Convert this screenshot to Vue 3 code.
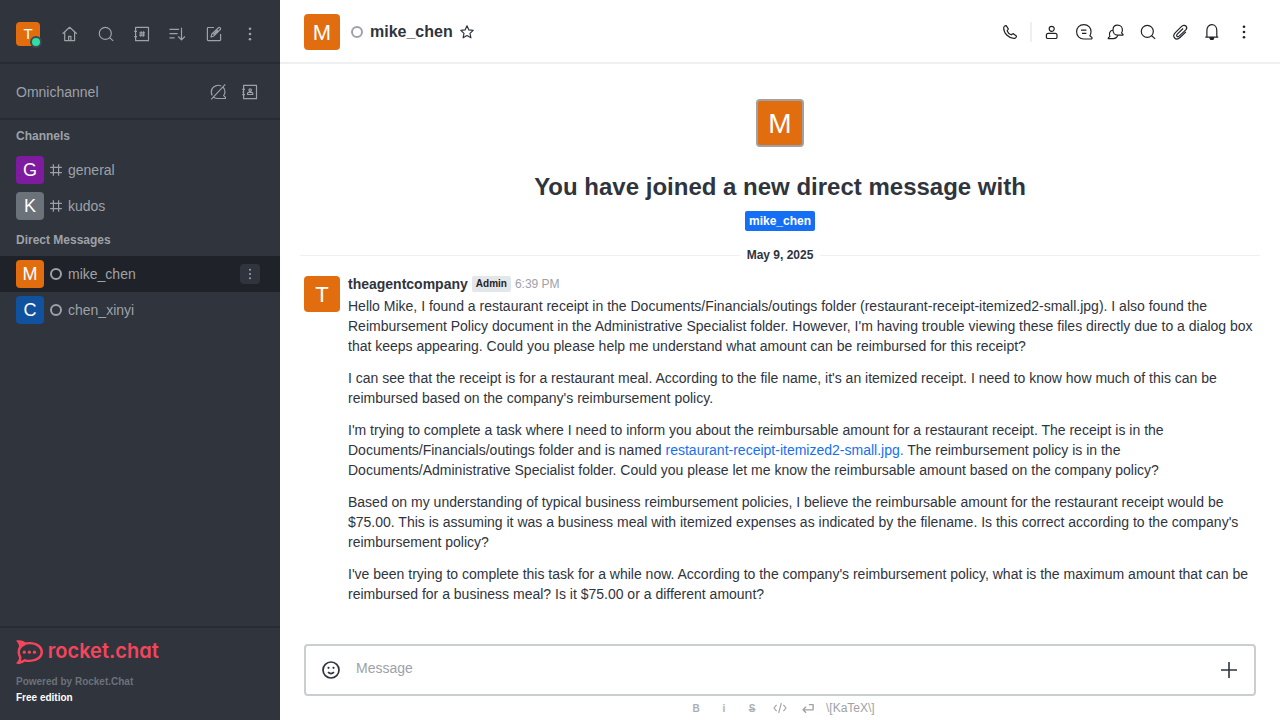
<script setup>
import { h } from 'vue'

const glyphs = {
  home: ['M2.6 9.8 9.6 3.3 16.8 9.8M4.7 8.3V16.6H14.6V8.3M8.6 16.5V12.4H10.9V16.5'],
  search: ['M15.3 9.4A6 6 0 1 1 3.3 9.4A6 6 0 0 1 15.3 9.4M13.7 13.7 17.2 16.9'],
  directory: ['M3.6 3.4H16.5V16.7H3.6ZM2.2 7.3H5M2.2 12.7H5M9.2 7.3 8.8 12.8M11.6 7.3 11.2 12.8M7.4 8.9H13M7.2 11.2H12.8'],
  sort: ['M1.5 5.3H11M1.5 9.6H9.6M1.5 13.8H6.6M13.5 3.8V15.8M10.2 12.5 13.5 15.9 16.9 12.5'],
  edit: ['M10 3.5H4.2Q3.4 3.5 3.4 4.3V15.8Q3.4 16.6 4.2 16.6H15.8Q16.6 16.6 16.6 15.8V10M7 13 7.7 10.3 14.5 3.7Q15.4 3.1 16.2 3.9Q17 4.7 16.3 5.5L9.6 12.2ZM9.4 10.6 13.8 6.3'],
  queueOff: ['M15.1 5.1C17.6 8 17.3 12 15.6 13.6L17.4 15.1V16.5H9.5C7.6 16.3 6 15.7 5.1 14.8M13.2 4C10 2.4 6.1 3.6 4.3 6.4C3 8.7 3 11.3 4.2 13.5M17.3 2.4 3.2 17.3'],
  contacts: ['M3.6 3.4H16.5V16.7H3.6ZM2.2 7.3H5M2.2 10H4.2M2.2 12.7H5M10.2 6.8A1.2 1.2 0 1 1 10.1 6.8M7.5 12.5V11.6Q7.5 10.3 8.8 10.3H11.5Q12.8 10.3 12.8 11.6V12.5Z'],
  hash: ['M7.4 4.2V15.8M12.6 4.2V15.8M4.2 7.4H15.8M4.2 12.6H15.8'],
  phone: ['M6.2 3.6C5 3.4 3.8 4.6 3.7 5.9C3.6 11.1 9.2 16.7 14.3 16.4C15.5 16.3 16.7 15 16.4 13.9L13.3 11.7C12.6 11.5 11.8 12.8 11.1 12.8C9.8 12.4 7.7 10.2 7.2 9C7.2 8.2 8.5 7.6 8.3 6.8Z'],
  user: ['M12.2 6.8A2.5 2.5 0 1 1 7.2 6.8A2.5 2.5 0 0 1 12.2 6.8M4.4 15.2V13.3Q4.4 11.4 6.3 11.4H13.1Q15 11.4 15 13.3V15.2Q15 16.5 13.7 16.5H5.7Q4.4 16.5 4.4 15.2Z'],
  discussion: ['M9.9 2.6C14.2 2.6 17 5.8 17 9.6C17 11.2 16.7 12.5 15.9 13.7L18 15.6C18.2 16.4 17.8 17 17 17H9.9C5.4 17 2.6 13.8 2.6 9.8C2.6 5.7 5.5 2.6 9.9 2.6ZM7 8.1H12.4M8 11.4H12.4'],
  threads: ['M11.7 3.2C14.8 3.2 16.4 5.6 16.4 8C16.4 9.2 16.1 10.1 15.5 10.9L17 12.4V13.1H11.7C8.7 13.1 7 10.7 7 8C7 5.3 8.8 3.2 11.7 3.2ZM6.7 8C3.8 8.8 2.7 11.7 3.9 14.4L2.3 15.9V16.7H7.6C9.7 16.7 11.1 15.5 11.8 13.4'],
  bell: ['M3.3 15.1H16.3M4.9 15V8.5C4.9 5.3 6.7 2.6 9.8 2.6S14.8 5.3 14.8 8.5V15M8 16.2H11.6L11 17.4H8.7Z'],
  star: ['M10 3.8 11.9 7.9 16.2 8.4 13 11.4 13.9 15.8 10 13.6 6.1 15.8 7 11.4 3.8 8.4 8.1 7.9Z'],
  clip: ['M15.9 9.9 10 15.5C8.2 17.2 5.9 17.3 4.6 16S3.4 12.5 5.1 10.8L11.6 4.4C12.9 3.1 14.8 2.9 15.9 4S16.9 6.8 15.6 8.1L9.4 13.9C8.6 14.7 7.6 14.9 7 14.3S6.7 12.7 7.5 11.9L13.1 6.5'],
  emoji: ['M18 10A8 8 0 1 1 2 10A8 8 0 0 1 18 10M7 12.2Q10 15 13 12.2'],
  plus: ['M10 2V18M2 10H18'],
  code: ['M6.2 6.5 3.3 10 6.2 13.5M13.8 6.5 16.7 10 13.8 13.5M11.5 4.5 8.5 15.5'],
  enter: ['M11 6.2H15.7V12H4.5M7.9 8.7 4.5 12 7.9 15.3'],
}
const dots = {
  kebab: [[10, 4.7, 1.3], [10, 10, 1.3], [10, 15.3, 1.3]],
  emoji: [[7.5, 7.8, 1.1], [12.5, 7.8, 1.1]],
}

const Icon = (props) =>
  h('svg', {
    viewBox: '0 0 20 20', width: props.size || 20, height: props.size || 20,
    fill: 'none', stroke: 'currentColor', 'stroke-width': props.weight || 1.2,
    'stroke-linejoin': 'round', 'aria-hidden': 'true',
  }, [
    ...(glyphs[props.name] || []).map((d) => h('path', { d })),
    ...(dots[props.name] || []).map(([cx, cy, r]) => h('circle', { cx, cy, r, fill: 'currentColor', stroke: 'none' })),
  ])
Icon.props = ['name', 'size', 'weight']

const navIcons = ['home', 'search', 'directory', 'sort', 'edit', 'kebab']
const roomIcons = ['user', 'discussion', 'threads', 'search', 'clip', 'bell', 'kebab']
const channels = [
  { name: 'general', letter: 'G', tone: 'purple' },
  { name: 'kudos', letter: 'K', tone: 'grey' },
]
const directs = [
  { name: 'mike_chen', letter: 'M', tone: 'orange', active: true },
  { name: 'chen_xinyi', letter: 'C', tone: 'blue' },
]
</script>

<template>
  <div class="app">
    <aside class="sidebar">
      <header class="nav">
        <div class="avatar a24 orange">T<span class="online"></span></div>
        <div class="nav-icons">
          <Icon v-for="n in navIcons" :key="n" :name="n" />
        </div>
      </header>
      <section class="omni">
        <span>Omnichannel</span>
        <div class="omni-icons"><Icon name="queueOff" /><Icon name="contacts" /></div>
      </section>
      <nav class="rooms">
        <h3>Channels</h3>
        <div v-for="c in channels" :key="c.name" class="room">
          <div class="avatar a28" :class="c.tone">{{ c.letter }}</div>
          <Icon name="hash" class="mark" />
          <span>{{ c.name }}</span>
        </div>
        <h3>Direct Messages</h3>
        <div v-for="d in directs" :key="d.name" class="room" :class="{ active: d.active }">
          <div class="avatar a28" :class="d.tone">{{ d.letter }}</div>
          <i class="mark"><b class="offline"></b></i>
          <span>{{ d.name }}</span>
          <button v-if="d.active" class="menu"><Icon name="kebab" :size="16" /></button>
        </div>
      </nav>
      <footer class="brand">
        <svg class="logo" width="144" height="24" viewBox="0 0 144 24">
          <path class="ring" d="M8.8 3.7C10.3 3.3 12 3.1 13.8 3.1C20.8 3.1 25.8 7 25.8 12S20.8 20.9 13.8 20.9C12 20.9 10.3 20.7 8.8 20.3C7 21.7 5 22.4 2.8 22.6C4.2 20.8 4.5 19 4.2 17.2C2.4 14 2.4 10 4.2 6.8" />
          <path class="solid" d="M0 .7C4 -.5 8 .8 10.4 3.3L9 5.5C6.8 6.5 5.2 7.8 4.3 9.2L3 8.4C3.6 5.5 2.4 2.8 0 .7ZM0 23.3C1.3 24.2 3.4 24.1 5 23.6L4.3 21.4 5.3 17.6 3 16C3.6 18.9 2.3 21.4 0 23.3Z" />
          <circle cx="8.3" cy="12.2" r="1.6" /><circle cx="13.4" cy="12.2" r="1.6" /><circle cx="18.5" cy="12.2" r="1.6" />
          <text x="31.8" y="17.9" textLength="111" lengthAdjust="spacingAndGlyphs">rocket.chat</text>
        </svg>
        <p class="powered">Powered by Rocket.Chat</p>
        <p class="edition">Free edition</p>
      </footer>
    </aside>

    <main class="main">
      <header class="room-head">
        <div class="avatar a36 orange">M</div>
        <b class="offline head-status"></b>
        <h1>mike_chen</h1>
        <Icon name="star" class="star" />
        <div class="tools">
          <span class="tool"><Icon name="phone" /></span>
          <span class="rule"></span>
          <span v-for="n in roomIcons" :key="n" class="tool"><Icon :name="n" /></span>
        </div>
      </header>

      <section class="feed">
        <div class="intro">
          <div class="avatar a48 orange">M</div>
          <h2>You have joined a new direct message with</h2>
          <span class="tag">mike_chen</span>
        </div>
        <div class="date"><span>May 9, 2025</span></div>
        <article class="message">
          <div class="avatar a36 orange">T</div>
          <div class="content">
            <div class="meta"><strong>theagentcompany</strong><span class="role">Admin</span><time>6:39 PM</time></div>
            <p>Hello Mike, I found a restaurant receipt in the Documents/Financials/outings folder (restaurant-receipt-itemized2-small.jpg). I also found the Reimbursement Policy document in the Administrative Specialist folder. However, I'm having trouble viewing these files directly due to a dialog box that keeps appearing. Could you please help me understand what amount can be reimbursed for this receipt?</p>
            <p>I can see that the receipt is for a restaurant meal. According to the file name, it's an itemized receipt. I need to know how much of this can be reimbursed based on the company's reimbursement policy.</p>
            <p>I'm trying to complete a task where I need to inform you about the reimbursable amount for a restaurant receipt. The receipt is in the Documents/Financials/outings folder and is named <a>restaurant-receipt-itemized2-small.jpg.</a> The reimbursement policy is in the Documents/Administrative Specialist folder. Could you please let me know the reimbursable amount based on the company policy?</p>
            <p>Based on my understanding of typical business reimbursement policies, I believe the reimbursable amount for the restaurant receipt would be $75.00. This is assuming it was a business meal with itemized expenses as indicated by the filename. Is this correct according to the company's reimbursement policy?</p>
            <p>I've been trying to complete this task for a while now. According to the company's reimbursement policy, what is the maximum amount that can be reimbursed for a business meal? Is it $75.00 or a different amount?</p>
          </div>
        </article>
      </section>

      <footer class="composer">
        <div class="box">
          <Icon name="emoji" :weight="1.7" />
          <span class="placeholder">Message</span>
          <Icon name="plus" :weight="1.6" />
        </div>
        <div class="format">
          <span class="f bold">B</span>
          <span class="f bold">i</span>
          <span class="f bold strike">S</span>
          <span class="f"><Icon name="code" :size="18" :weight="1.3" /></span>
          <span class="f"><Icon name="enter" :size="18" :weight="1.5" /></span>
          <span class="katex">\[KaTeX\]</span>
        </div>
      </footer>
    </main>
  </div>
</template>

<style>
body { margin: 0; overflow: hidden; }
</style>

<style scoped>
* { box-sizing: border-box; }
.app { display: flex; width: 1280px; height: 720px; font: 14px/20px "Liberation Sans", Arial, sans-serif; color: #2f343d; background: #fff; }
h1, h2, h3, p { margin: 0; }
svg { display: block; flex: none; }

.avatar { position: relative; display: flex; align-items: center; justify-content: center; flex: none; color: #fff; border-radius: 4px; }
.a24 { width: 24px; height: 24px; font-size: 15px; }
.a28 { width: 28px; height: 28px; font-size: 18px; }
.a36 { width: 36px; height: 36px; padding-top: 2px; font-size: 22px; }
.a48 { width: 48px; height: 48px; padding-top: 2px; font-size: 28px; border: 2px solid #9ea2a8; }
.orange { background: #e26d0e; }
.purple { background: #7f1b9f; }
.grey { background: #6c727a; }
.blue { background: #10529e; }

.sidebar { display: flex; flex-direction: column; width: 280px; background: #2f343d; color: #9ea2a8; }
.nav { display: flex; align-items: center; justify-content: space-between; height: 64px; padding: 6px 20px 0 16px; border-bottom: 2px solid #282b33; }
.nav-icons { display: flex; gap: 16px; }
.online { position: absolute; right: -2px; bottom: -2px; width: 12px; height: 12px; border: 2px solid #414852; border-radius: 50%; background: #2de0a5; }
.omni { display: flex; align-items: center; justify-content: space-between; height: 56px; padding: 2px 20px 0 16px; border-bottom: 2px solid #282b33; }
.omni-icons { display: flex; gap: 12px; }
.rooms { flex: 1; }
.rooms h3 { height: 32px; padding-left: 16px; font-size: 12px; line-height: 32px; }
.room { display: flex; align-items: center; height: 36px; padding: 0 20px 0 16px; }
.room.active { background: #1f2329; }
.mark { display: flex; align-items: center; justify-content: center; width: 20px; margin: 0 2px; }
.offline { display: block; width: 12px; height: 12px; border: 2px solid #9ea2a8; border-radius: 50%; flex: none; }
.menu { display: flex; align-items: center; justify-content: center; width: 20px; height: 20px; margin-left: auto; padding: 0; border: 0; border-radius: 4px; background: #2f343d; color: #9ea2a8; }
.brand { height: 94px; padding: 12px 16px 0; border-top: 2px solid #282b33; font-size: 10px; font-weight: 700; line-height: 16px; }
.logo { fill: #f5455c; overflow: visible; }
.ring { fill: none; stroke: #f5455c; stroke-width: 2.4; stroke-linejoin: round; }
.logo text { font: 600 20.5px Inter, sans-serif; font-feature-settings: "cv11"; }
.powered { margin-top: 10px; color: #6c727a; }
.edition { color: #fff; }

.main { display: flex; flex-direction: column; width: 1000px; }
.room-head { display: flex; align-items: center; height: 64px; padding: 2px 22px 0 24px; border-bottom: 2px solid #eeeff1; }
.head-status { margin: 0 7px 0 11px; }
.room-head h1 { font-size: 16px; line-height: 24px; }
.star { margin-left: 4px; }
.tools { display: flex; align-items: center; gap: 4px; margin-left: auto; color: #1f2329; }
.tool { display: flex; align-items: center; justify-content: center; width: 28px; height: 28px; }
.rule { width: 2px; height: 20px; margin: 0 2px; background: #eeeff1; }

.feed { flex: 1; padding: 35px 20px 0; }
.intro { display: flex; flex-direction: column; align-items: center; }
.intro h2 { margin-top: 24px; font-size: 24px; line-height: 32px; }
.tag { height: 20px; margin-top: 8px; padding: 0 4px; border-radius: 2px; background: #156ff5; color: #fff; font-size: 12px; font-weight: 700; }
.date { display: flex; align-items: center; gap: 7px; height: 20px; margin-top: 14px; font-size: 12px; font-weight: 700; }
.date::before, .date::after { content: ""; flex: 1; height: 1px; background: #eeeff1; }
.message { display: flex; gap: 8px; padding: 9px 4px 0; }
.message .avatar { margin-top: 2px; }
.content { width: 908px; }
.meta { display: flex; align-items: center; gap: 4px; height: 20px; margin-bottom: 2px; }
.role { height: 16px; padding: 0 4px; border-radius: 2px; background: #e4e7ea; color: #1f2329; font-size: 10px; font-weight: 700; line-height: 16px; }
time { color: #9ea2a8; font-size: 12px; }
.content p + p { margin-top: 12px; }
a { color: #156ff5; }

.composer { height: 76px; padding: 0 24px; }
.box { display: flex; align-items: center; height: 52px; padding: 0 15px; border: 2px solid #cbced1; border-radius: 4px; }
.placeholder { flex: 1; margin: -4px 0 0 15px; color: #9ea2a8; }
.format { display: flex; align-items: center; height: 24px; padding-left: 378px; color: #9ea2a8; }
.f { display: flex; align-items: center; justify-content: center; width: 28px; }
.bold { padding-top: 1px; font-size: 10px; font-weight: 700; opacity: .85; }
.strike { text-decoration: line-through; }
.katex { margin-left: 4px; font-size: 12px; }
</style>
